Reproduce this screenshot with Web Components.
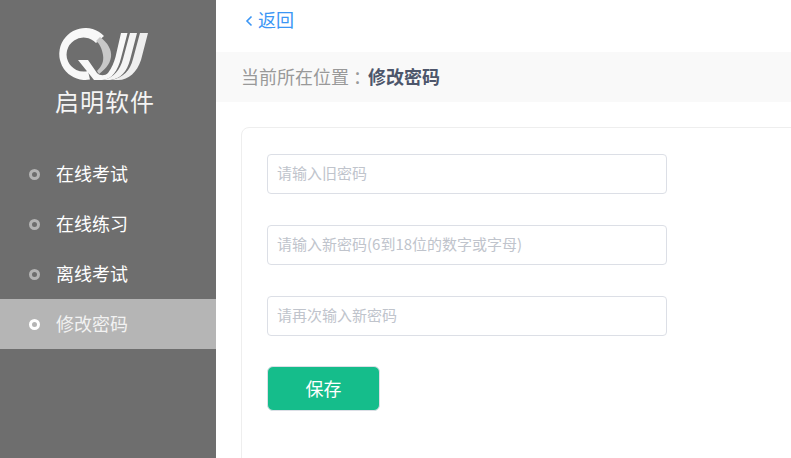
<!DOCTYPE html>
<html lang="zh">
<head>
<meta charset="utf-8">
<title>修改密码</title>
<style>
  html, body { margin: 0; height: 100%; overflow: hidden; }
  body { font-family: "Noto Sans CJK SC", "Liberation Sans", sans-serif; }
</style>
</head>
<body>
<app-layout>
  <side-nav slot="side">
    <nav-item>在线考试</nav-item>
    <nav-item>在线练习</nav-item>
    <nav-item>离线考试</nav-item>
    <nav-item active>修改密码</nav-item>
  </side-nav>
  <back-link>返回</back-link>
  <bread-crumb label="当前所在位置">修改密码</bread-crumb>
  <form-card>
    <text-field placeholder="请输入旧密码"></text-field>
    <text-field placeholder="请输入新密码(6到18位的数字或字母)"></text-field>
    <text-field placeholder="请再次输入新密码"></text-field>
    <save-button>保存</save-button>
  </form-card>
</app-layout>

<script>
// small helper: every element below is just a shadow root with its own css + markup
function shell(el, html) {
  el.attachShadow({ mode: "open" }).innerHTML = html;
}

class AppLayout extends HTMLElement {
  connectedCallback() {
    shell(this, `
      <style>
        :host { display: flex; height: 100vh; background: #fff; overflow: hidden; }
        main { flex: 1; min-width: 0; display: flex; flex-direction: column; }
        ::slotted(*) { flex: none; }
      </style>
      <slot name="side"></slot>
      <main><slot></slot></main>
    `);
  }
}

class SideNav extends HTMLElement {
  connectedCallback() {
    shell(this, `
      <style>
        :host { display: flex; flex-direction: column; width: 216px; background: #6e6e6e; }
        .logo { height: 149px; box-sizing: border-box; padding: 25px 0 0 55px; }
        svg { display: block; width: 96px; height: 58px; filter: blur(.4px); }
        .name { font-size: 24px; line-height: 30px; letter-spacing: 1px; font-weight: 400; color: #f4f4f4; margin-top: 3px; }
      </style>
      <div class="logo">
        <svg viewBox="55 25 96 58" aria-hidden="true">
          <path fill="#f8f8f8" d="M104 36A26 26 0 1 0 90 79.6L88 71A17 17 0 1 1 96 43Z"/>
          <path fill="#c8c8c8" d="M100 37C108 43 112 50 111 57C110 65 104 70 99 74L97 71C102 66 104 61 103 55C102 49 100 44 96 41Z"/>
          <path fill="#f8f8f8" d="M78 60H88L97 73C100 76 105 76 108 73C112 68 114 62 115.5 57L121 33H127.5L121 58C118 70 112 80 102 80H94Z"/>
          <path fill="#f4f4f4" d="M130 33H137L130 60C127 71 121 79 110 80H104C114 77 120 70 123 59Z"/>
          <path fill="#eeeeee" d="M140 33H148L141 60C137 72 129 80 118 80H112C123 77 130 71 133 59Z"/>
        </svg>
        <div class="name">启明软件</div>
      </div>
      <slot></slot>
    `);
  }
}

class NavItem extends HTMLElement {
  connectedCallback() {
    shell(this, `
      <style>
        :host { display: flex; align-items: center; height: 50px; padding-left: 29px; color: #fff; font-size: 18px; }
        :host([active]) { background: #b5b5b5; color: #f2f2f2; }
        i { width: 5px; height: 5px; border: 3px solid #b4b4b4; background: #6e6e6e; border-radius: 50%; margin-right: 16px; }
        span { position: relative; top: -1px; }
        :host([active]) i { border-color: #fff; background: #b5b5b5; }
      </style>
      <i></i><span><slot></slot></span>
    `);
  }
}

class BackLink extends HTMLElement {
  connectedCallback() {
    shell(this, `
      <style>
        :host { display: flex; align-items: center; height: 52px; box-sizing: border-box; padding: 0 0 14px 29px; color: #3b96f5; font-size: 18px; }
        svg { width: 8px; height: 12px; margin-right: 5px; margin-top: 3px; }
      </style>
      <svg viewBox="0 0 8 12" aria-hidden="true"><path d="M6.5 1.5 2 6l4.5 4.5" fill="none" stroke="currentColor" stroke-width="1.6"/></svg>
      <slot></slot>
    `);
  }
}

class BreadCrumb extends HTMLElement {
  connectedCallback() {
    shell(this, `
      <style>
        :host { display: flex; align-items: center; height: 50px; box-sizing: border-box; padding: 0 0 2px 25px; background: #f9f9f9; font-size: 18px; }
        span { color: #999; width: 127px; white-space: nowrap; }
        /* colon glyph sits at the left of its em box, so trim the advance to keep it clear of the bold part */
        em { font-style: normal; margin-left: 4px; letter-spacing: -5px; }
        b { color: #4d566b; font-weight: 700; }
      </style>
      <span>${this.getAttribute("label")}<em>：</em></span><b><slot></slot></b>
    `);
  }
}

class FormCard extends HTMLElement {
  connectedCallback() {
    shell(this, `
      <style>
        :host { display: flex; flex-direction: column; align-items: flex-start; gap: 31px; margin: 25px -20px 0 25px; padding: 26px 25px 60px; border: 1px solid #eee; border-radius: 8px; background: #fff; }
      </style>
      <slot></slot>
    `);
  }
}

class TextField extends HTMLElement {
  connectedCallback() {
    shell(this, `
      <style>
        :host { display: block; width: 400px; height: 40px; }
        input { display: block; width: 100%; height: 100%; box-sizing: border-box; padding: 0 0 4px 9px; border: 1px solid #dcdfe6; border-radius: 4px; outline: 0; font: 15px "Noto Sans CJK SC", "Liberation Sans", sans-serif; color: #606266; }
        input::placeholder { color: #c0c4cc; opacity: 1; }
      </style>
      <input type="password" placeholder="${this.getAttribute("placeholder")}">
    `);
  }
}

class SaveButton extends HTMLElement {
  connectedCallback() {
    shell(this, `
      <style>
        :host { display: block; margin-top: -1px; }
        button { display: block; width: 113px; height: 45px; padding: 0 0 2px; border: 1px solid #dcdfe6; border-radius: 6px; background: #15bd8b; color: #fff; font: 18px "Noto Sans CJK SC", "Liberation Sans", sans-serif; cursor: pointer; }
      </style>
      <button type="button"><slot></slot></button>
    `);
  }
}

customElements.define("app-layout", AppLayout);
customElements.define("side-nav", SideNav);
customElements.define("nav-item", NavItem);
customElements.define("back-link", BackLink);
customElements.define("bread-crumb", BreadCrumb);
customElements.define("form-card", FormCard);
customElements.define("text-field", TextField);
customElements.define("save-button", SaveButton);
</script>
</body>
</html>
